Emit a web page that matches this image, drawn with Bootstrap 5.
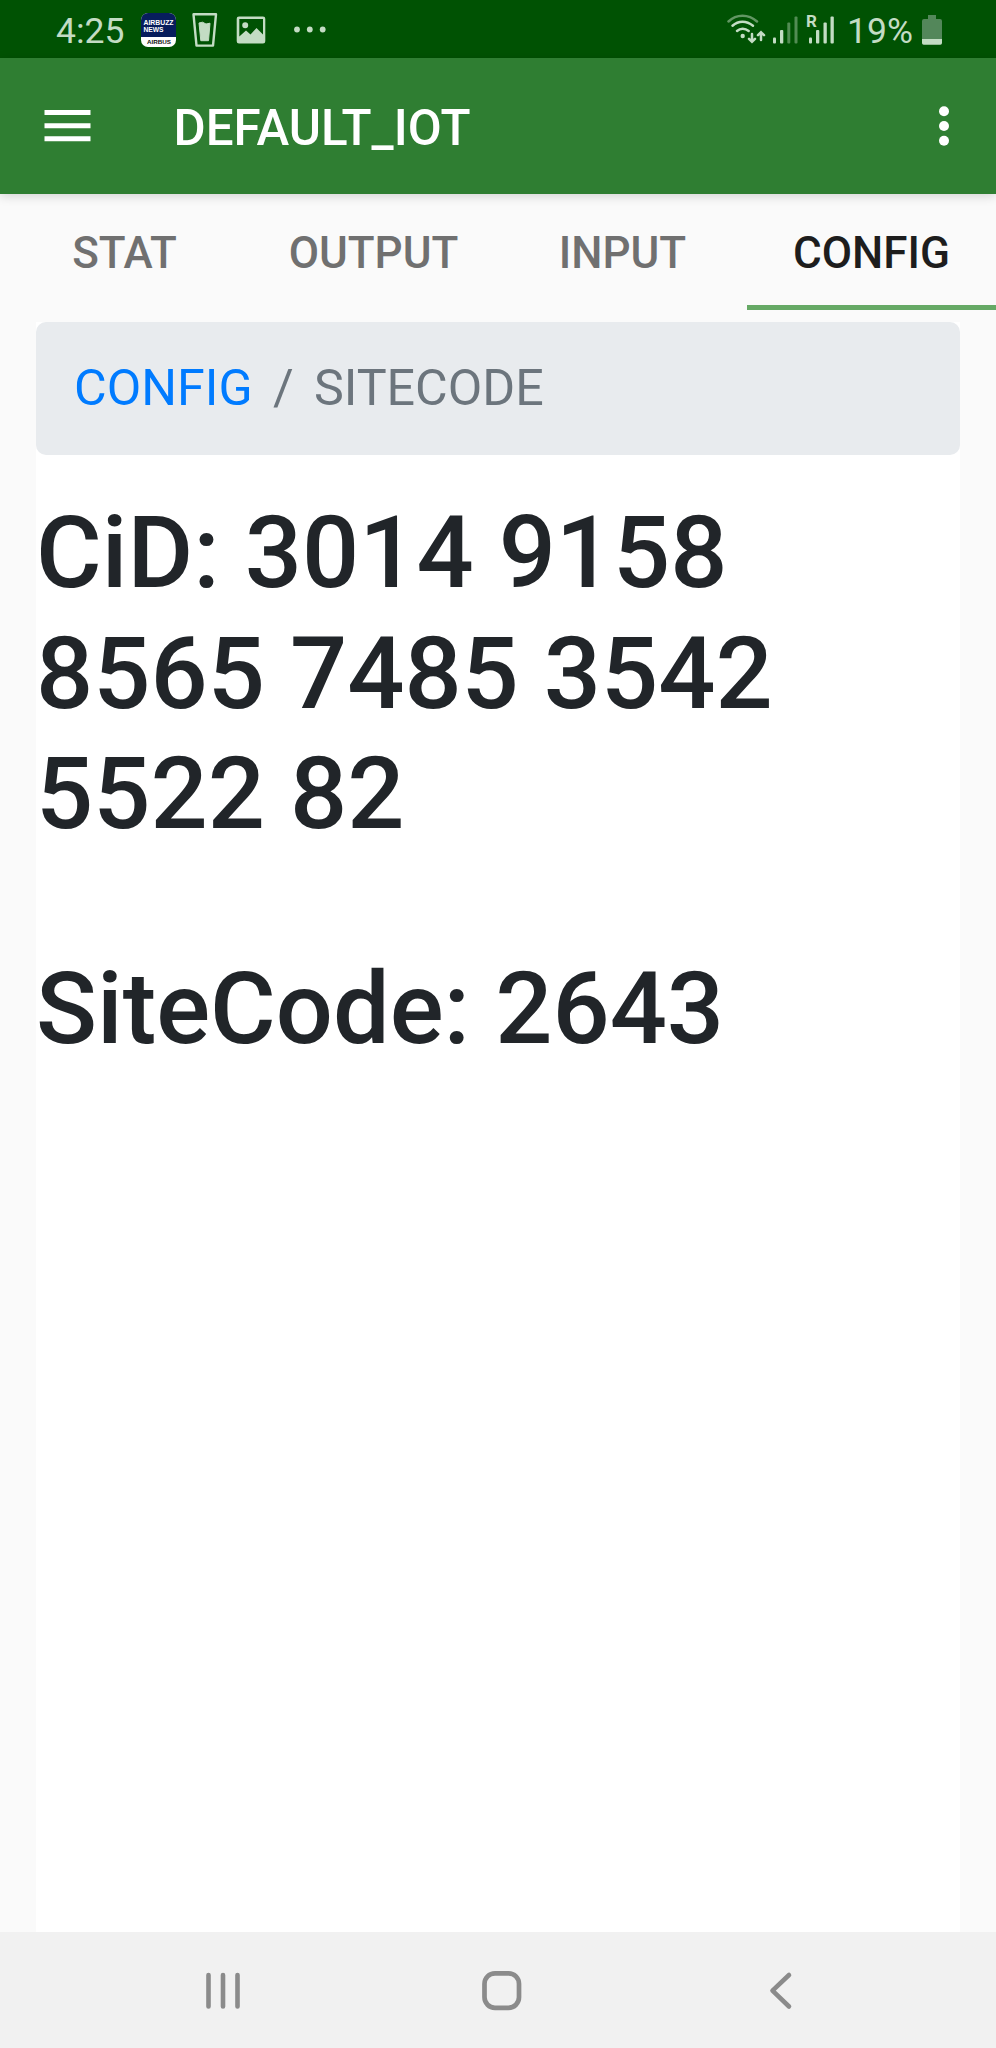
<!DOCTYPE html>
<html lang="en">
<head>
<meta charset="utf-8">
<meta name="viewport" content="width=device-width, initial-scale=1">
<title>DEFAULT_IOT</title>
<link rel="stylesheet" href="https://cdn.jsdelivr.net/npm/bootstrap@5.3.0/dist/css/bootstrap.min.css">
<style>
body { font-family: Roboto, sans-serif; background: #fafafa; height: 2048px; overflow: hidden; }
svg { display: block; flex: none; }
.status-bar { height: 58px; background: #005203; color: #c3dcc4; font-size: 35.5px; line-height: 58px; padding: 4px 54px 0 56px; }
.app-bar { height: 136px; background: #2f7e32; padding: 0 43px 0 44px; box-shadow: 0 2px 10px rgba(0,0,0,.16); z-index: 1; }
.app-title { font-size: 49.3px; font-weight: 500; line-height: 1; margin-left: 82.5px; padding-top: 5px; color: #fff; }
.tab-strip { height: 116px; }
.tab-strip .nav-link { height: 116px; padding: 0; line-height: 119px; font-size: 44px; font-weight: 500; color: #707070; border-radius: 0; text-align: center; }
.tab-strip .nav-link.active { color: #1d1d1d; background: none; border-bottom: 5px solid #66a965; }
.page { margin: 12px 36px 0; background: #fff; }
.breadcrumb { --bs-breadcrumb-item-padding-x: 20.3px; --bs-breadcrumb-divider-color: #6c757d; --bs-breadcrumb-item-active-color: #6c757d; background: #e8ebee; height: 133px; border-radius: 10px; padding: 0 38px 2px; font-size: 50.2px; margin: 0; }
.breadcrumb a[href] { color: #007bff; text-decoration: none; }
.code-line { font-size: 100.7px; line-height: 120.6px; font-weight: 500; color: #212529; margin: 0; }
.cid { padding-top: 38px; }
.site { padding-top: 94px; }
.sys-nav { height: 116px; background: #f1f1f1; }
</style>
</head>
<body class="d-flex flex-column">
<header class="status-bar d-flex align-items-center justify-content-between flex-shrink-0">
  <div class="d-flex align-items-center">
    <span id="clock">4:25</span>
    <svg class="ms-3" width="190" height="58" viewBox="140 2 190 58">
      <clipPath id="tile"><rect x="141" y="13" width="35" height="34" rx="7"/></clipPath>
      <g clip-path="url(#tile)"><rect x="141" y="13" width="35" height="34" fill="#fff"/><rect x="141" y="13" width="35" height="24" fill="#071d5c"/></g>
      <g font-family="Liberation Sans, sans-serif" font-weight="700">
        <text x="143.5" y="25.3" font-size="7.4" fill="#fff" textLength="30" lengthAdjust="spacingAndGlyphs">AIRBUZZ</text>
        <text x="143.5" y="32.3" font-size="7.4" fill="#fff" textLength="20" lengthAdjust="spacingAndGlyphs">NEWS</text>
        <text x="147" y="44.3" font-size="6.2" fill="#111" textLength="24" lengthAdjust="spacingAndGlyphs">AIRBUS</text>
      </g>
      <g fill="none" stroke="#c3dcc4" stroke-width="2.4" stroke-linejoin="round">
        <path d="M193.500 14.300h22.500l-3 31.300h-16.500z"/>
        <path d="M199 23l3.500-.8 3.500 1.800 4-.8-1.500 17.500h-7.700z" fill="#c3dcc4" stroke-width="1"/>
      </g>
      <path fill="#c3dcc4" fill-rule="evenodd" d="M239 16.500h24q2.300 0 2.300 2.300v22.500q0 2.300-2.300 2.300h-24q-2.300 0-2.300-2.300v-22.500q0-2.300 2.300-2.300zM239.300 19v17.500l6.700-6 4.500 4 6-6.500 6.500 6.500V19zM242.200 25.300a3 3 0 1 0 6 0 3 3 0 1 0-6 0z"/>
      <g fill="#c3dcc4"><circle cx="297" cy="29.500" r="2.900"/><circle cx="309.800" cy="29.500" r="2.900"/><circle cx="322.700" cy="29.500" r="2.900"/></g>
    </svg>
  </div>
  <div class="d-flex align-items-center">
    <svg width="120" height="58" viewBox="726 2 120 58">
      <g fill="none" stroke="#c3dcc4" stroke-width="2.500" stroke-linecap="round">
        <path d="M727.500 21.500q6-5.700 14-5.700t14.500 5.700" opacity=".5"/>
        <path d="M731.500 25.700q4.500-4 10-4t10.500 4"/>
        <path d="M736 31q2.500-2.300 5.700-2.300t6 2.300"/>
        <path d="M751 34v7.500m-3-2.700l3 3 3-3M760 40v-7.500m-3 2.700l3-3 3 3"/>
      </g>
      <g fill="#c3dcc4">
        <circle cx="741.700" cy="36" r="2.200"/>
        <rect x="772" y="37.500" width="3" height="6" rx="1"/><rect x="779" y="30" width="3.300" height="13.500" rx="1"/>
        <g opacity=".42"><rect x="786.300" y="22.500" width="3" height="21" rx="1"/><rect x="793.500" y="16.500" width="3" height="27" rx="1"/></g>
        <rect x="808" y="37.500" width="3" height="6" rx="1"/><rect x="815" y="30" width="3.300" height="13.500" rx="1"/><rect x="822.500" y="22.500" width="3.300" height="21" rx="1"/><rect x="829.500" y="16.500" width="3.300" height="27" rx="1"/>
        <text x="805" y="26.700" font-size="17" font-weight="700">R</text>
      </g>
    </svg>
    <span id="pct">19%</span>
    <svg class="ms-2" width="21" height="58" viewBox="919 2 21 58">
      <path d="M926 15h8v4h4q2 0 2 2v18h-20V21q0-2 2-2h4z" fill="#53875a"/><path d="M920 39h20v4q0 1.700-1.700 1.700h-16.600q-1.700 0-1.700-1.700z" fill="#c3dcc4"/>
    </svg>
  </div>
</header>
<nav class="app-bar d-flex align-items-center flex-shrink-0 position-relative">
  <svg width="47" height="34" viewBox="0 0 47 34" fill="#fff"><path d="M.5 1h46v5h-46zM.5 14.300h46v5h-46zM.5 27.300h46v5h-46z"/></svg>
  <span class="app-title">DEFAULT_IOT</span>
  <svg class="ms-auto" width="18" height="44" viewBox="0 0 18 44" fill="#fff"><circle cx="9" cy="7.300" r="5"/><circle cx="9" cy="22" r="5"/><circle cx="9" cy="36.700" r="5"/></svg>
</nav>
<ul class="nav nav-justified tab-strip flex-nowrap flex-shrink-0">
  <li class="nav-item"><a class="nav-link" href="#">STAT</a></li>
  <li class="nav-item"><a class="nav-link" href="#">OUTPUT</a></li>
  <li class="nav-item"><a class="nav-link" href="#">INPUT</a></li>
  <li class="nav-item"><a class="nav-link active" href="#">CONFIG</a></li>
</ul>
<main class="page flex-grow-1">
  <ol class="breadcrumb align-items-center">
    <li class="breadcrumb-item"><a href="#">CONFIG</a></li>
    <li class="breadcrumb-item active">SITECODE</li>
  </ol>
  <h1 class="code-line cid">CiD: 3014 9158<br>8565 7485 3542<br>5522 82</h1>
  <h1 class="code-line site">SiteCode: 2643</h1>
</main>
<footer class="sys-nav flex-shrink-0">
  <svg class="w-100" height="116" viewBox="0 1932 996 116" fill="none" stroke="#8b8b8b" stroke-linecap="round" stroke-linejoin="round">
    <path d="M208.500 1975v31.500M223 1975v31.500M237.500 1975v31.500" stroke-width="4.600"/>
    <rect x="484.500" y="1973.300" width="34.500" height="34.500" rx="10.500" stroke-width="4.700"/>
    <path d="M789 1975l-16.500 15.700 16.500 15.800" stroke-width="4.600"/>
  </svg>
</footer>
<script src="https://cdn.jsdelivr.net/npm/bootstrap@5.3.0/dist/js/bootstrap.bundle.min.js"></script>
</body>
</html>
